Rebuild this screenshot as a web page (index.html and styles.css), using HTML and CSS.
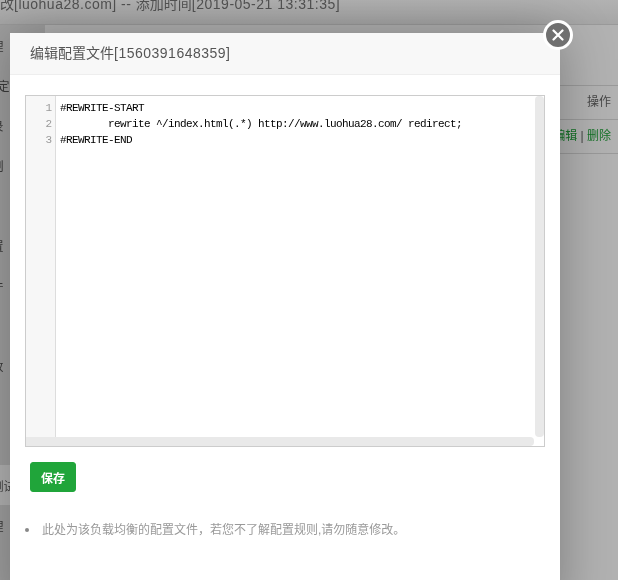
FILE: index.html
```html
<!DOCTYPE html>
<html lang="zh">
<head>
<meta charset="utf-8">
<title>编辑配置文件</title>
<link rel="stylesheet" href="styles.css">
</head>
<body>
<div class="page">
  <div class="page-title">改<span class="latin">[luohua28.com] -- </span>添加时间<span class="latin">[2019-05-21 13:31:35]</span></div>
  <div class="page-body">
    <ul class="side">
      <li>域名管理</li>
      <li>子目录绑定</li>
      <li>网站目录</li>
      <li>流量限制</li>
      <li></li>
      <li>负载配置</li>
      <li>配置文件</li>
      <li></li>
      <li>配置修改</li>
      <li></li>
      <li></li>
      <li class="side-on">负载均衡测试</li>
      <li>日志管理</li>
    </ul>
    <div class="main">
      <div class="toolbar"></div>
      <div class="th">操作</div>
      <div class="td"><a>编辑</a> | <a>删除</a></div>
    </div>
  </div>
</div>
<div class="shade"></div>
<section class="modal">
  <button class="close" aria-label="关闭">
    <svg viewBox="0 0 12 12" width="12" height="12"><path d="M1.5 1.5l9 9M10.5 1.5l-9 9" fill="none" stroke="#fff" stroke-width="2.2" stroke-linecap="round"/></svg>
  </button>
  <header class="modal-head">编辑配置文件<span class="modal-id">[1560391648359]</span></header>
  <div class="modal-body">
    <div class="editor">
      <div class="editor-main">
        <ol class="gutter"><li>1</li><li>2</li><li>3</li></ol>
        <pre class="code">#REWRITE-START
	rewrite ^/index.html(.*) http://www.luohua28.com/ redirect;
#REWRITE-END</pre>
        <div class="vbar"></div>
      </div>
      <div class="hbar"></div>
    </div>
    <button class="save">保存</button>
    <ul class="notes"><li>此处为该负载均衡的配置文件，若您不了解配置规则,请勿随意修改。</li></ul>
  </div>
</section>
</body>
</html>
```
FILE: styles.css
```css
* { box-sizing: border-box; }
html, body { margin: 0; height: 100%; overflow: hidden; }
body {
  font-family: "Liberation Sans", "Noto Sans CJK SC", sans-serif;
  background: #fff;
  color: #666;
}
.page { height: 580px; overflow: hidden; will-change: transform; }
.page-title {
  height: 25px;
  font-size: 14px;
  line-height: 8px;
  color: #777;
  white-space: nowrap;
  border-bottom: 1px solid #ddd;
  background: linear-gradient(#fff, #eee);
}
.latin { letter-spacing: .5px; }
.page-body { display: flex; height: 555px; }
.side {
  list-style: none;
  margin: 0 0 0 -75px;
  padding: 0;
  width: 120px;
  flex: none;
  background: #e4e4e4;
  overflow: hidden;
}
.side li {
  height: 40px;
  padding-right: 11px;
  display: flex;
  justify-content: center;
  align-items: center;
  font-size: 12px;
  white-space: nowrap;
  color: #555;
}
.side .side-on { background: #fff; }
.main { flex: 1; }
.toolbar { height: 60px; }
.th, .td {
  height: 34px;
  line-height: 33px;
  padding-right: 7px;
  text-align: right;
  font-size: 12px;
  border-top: 1px solid #ddd;
}
.td { border-bottom: 1px solid #ddd; height: 35px; }
.td a { color: #20a53a; }
.shade { position: fixed; inset: 0; background: rgba(0, 0, 0, .3); }
.modal {
  position: absolute;
  left: 10px;
  top: 33px;
  width: 550px;
  height: 580px;
  background: #fff;
  box-shadow: 1px 1px 50px rgba(0, 0, 0, .3);
  will-change: transform;
}
.close {
  position: absolute;
  right: -13px;
  top: -13px;
  width: 30px;
  height: 30px;
  padding: 0;
  display: flex;
  align-items: center;
  justify-content: center;
  border: 3px solid #fff;
  border-radius: 50%;
  background: #707070;
}
.modal-head {
  height: 42px;
  line-height: 41px;
  padding-left: 20px;
  font-size: 14px;
  color: #555;
  background: #f8f8f8;
  border-bottom: 1px solid #eee;
}
.modal-id { letter-spacing: .5px; }
.modal-body { padding: 20px 15px 0; }
.editor {
  height: 352px;
  border: 1px solid #ccc;
  display: flex;
  flex-direction: column;
  background: #fff;
}
.editor-main { flex: 1; display: flex; min-height: 0; }
.gutter {
  list-style: none;
  margin: 0;
  padding: 4px 3px 0 0;
  width: 30px;
  flex: none;
  background: #f7f7f7;
  border-right: 1px solid #ddd;
  text-align: right;
  font: 11px/16px "Liberation Mono", monospace;
  color: #999;
}
.code {
  flex: 1;
  margin: 0;
  padding: 4px 4px 0;
  font: 11px/16px "Liberation Mono", "Noto Sans CJK SC", monospace;
  letter-spacing: -.6px;
  color: #000;
  tab-size: 8;
}
.vbar { width: 9px; background: #e9e9e9; border-radius: 4px; }
.hbar { height: 9px; margin-right: 10px; background: #e9e9e9; border-radius: 0 4px 4px 0; }
.save {
  display: block;
  margin: 15px 0 0 5px;
  width: 46px;
  height: 30px;
  padding: 0;
  border: 1px solid #20a53a;
  border-radius: 3px;
  background: #20a53a;
  color: #fff;
  font: bold 12px "Liberation Sans", "Noto Sans CJK SC", sans-serif;
}
.notes {
  list-style: none;
  margin: 28px 0 0;
  padding: 0;
  font-size: 12px;
  line-height: 20px;
  color: #999;
}
.notes li { display: flex; align-items: center; gap: 13px; }
.notes li::before {
  content: "";
  width: 4px;
  height: 4px;
  border-radius: 50%;
  background: #888;
  flex: none;
}
```
